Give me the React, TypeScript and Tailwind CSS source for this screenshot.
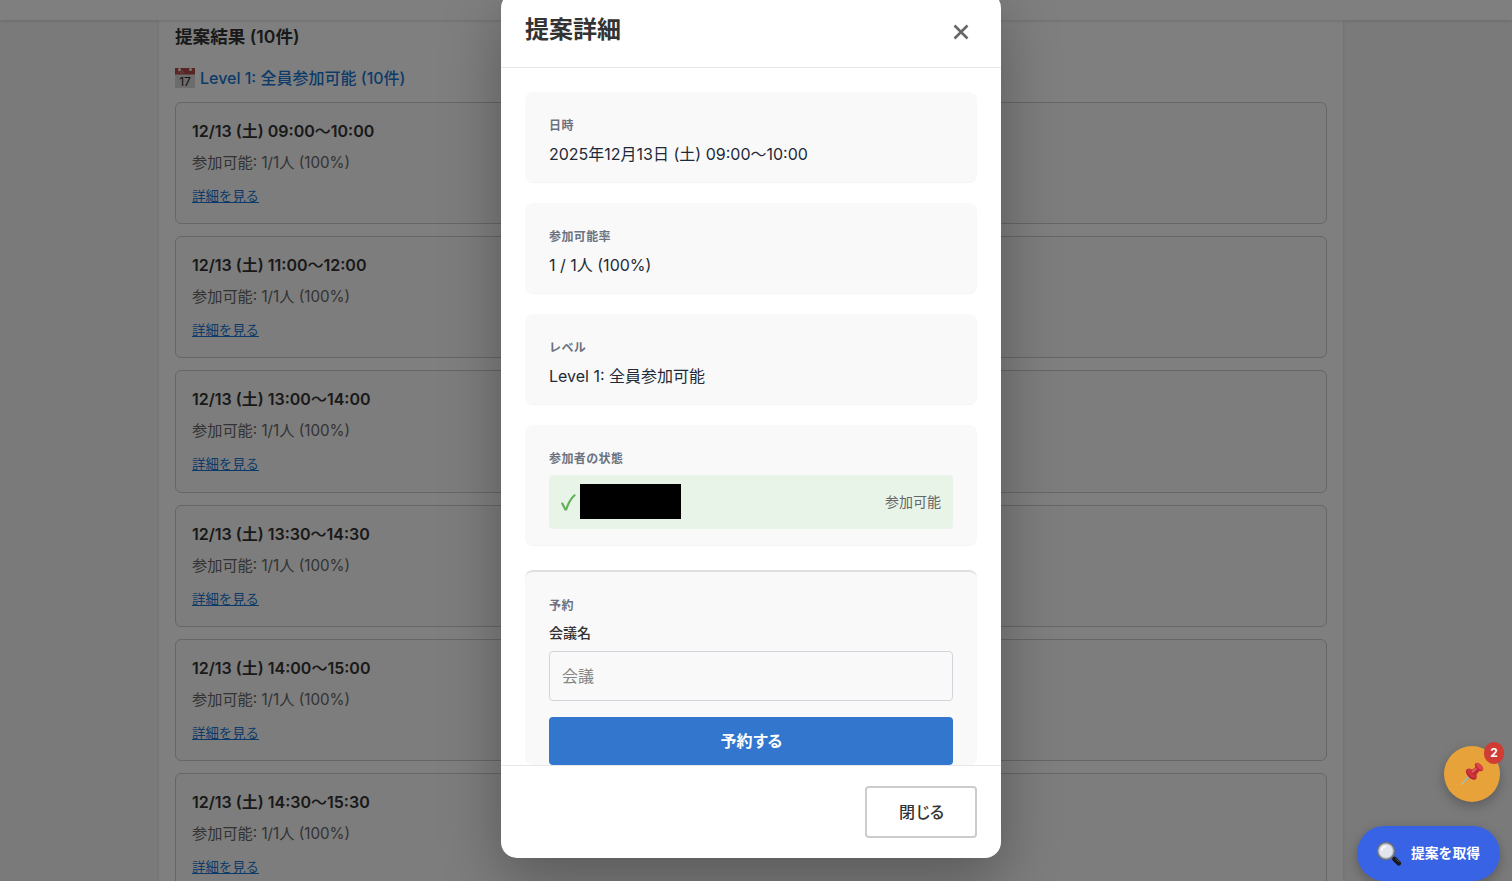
import React from "react";

const slots = [
  ["09:00", "10:00"],
  ["11:00", "12:00"],
  ["13:00", "14:00"],
  ["13:30", "14:30"],
  ["14:00", "15:00"],
  ["14:30", "15:30"],
];

const details = [
  { label: "日時", value: "2025年12月13日 (土) 09:00〜10:00" },
  { label: "参加可能率", value: "1 / 1人 (100%)" },
  { label: "レベル", value: "Level 1: 全員参加可能" },
];

function CalendarIcon() {
  return (
    <svg width="20" height="20" viewBox="0 0 20 20" className="shrink-0">
      <rect width="20" height="20" rx="0.6" fill="#d8d8d8" />
      <path d="M0 0h20v6.500H0z" fill="#b04a47" />
      <path d="m2.500 5.500 1.800-3.700 1.800 3.700M7 5.500V2.500l2.200 3" fill="none" stroke="#d3a29f" strokeWidth="0.6" />
      <circle cx="4.500" cy="1.500" r="1.500" fill="#f3f3f3" />
      <circle cx="15.500" cy="1.500" r="1.500" fill="#f3f3f3" />
      <text x="10" y="17.600" textAnchor="middle" fontSize="12" fontFamily="Inter, sans-serif" fontWeight="400" fill="#222">17</text>
    </svg>
  );
}

function PinIcon() {
  return (
    <svg width="24" height="24" viewBox="0 0 24 24">
      <path d="M.5 23.500 9.500 12.500l2 2Z" fill="#8fa3a8" />
      <path d="m1 22.800 9-9.300" stroke="#c9d6d8" strokeWidth="0.8" />
      <ellipse cx="11.300" cy="12.300" rx="6.700" ry="3.700" transform="rotate(45 11.300 12.300)" fill="#b3242e" />
      <ellipse cx="11.800" cy="11.400" rx="6" ry="3.200" transform="rotate(45 11.800 11.400)" fill="#cf343c" />
      <path d="m9.800 9.500 6.700-5.300 3.800 3.800-5.300 6.300Z" fill="#bd2b35" />
      <path d="m11 9.300 6-4.800 1.400 1.400-5.600 5.200Z" fill="#e2585b" />
      <ellipse cx="19" cy="5" rx="5" ry="2.800" transform="rotate(45 19 5)" fill="#be2933" />
      <ellipse cx="19.600" cy="4.400" rx="4.500" ry="2.100" transform="rotate(45 19.600 4.400)" fill="#dc464b" />
    </svg>
  );
}

function SearchIcon() {
  return (
    <svg width="26" height="26" viewBox="0 0 26 26">
      <path d="m15.800 15.500 3.400 3.400" stroke="#777" strokeWidth="3" />
      <path d="m18.500 18 4.300 4.300" stroke="#17191c" strokeWidth="4.600" strokeLinecap="round" />
      <path d="m19.500 17.300 4 4" stroke="#55585c" strokeWidth="1" />
      <circle cx="10" cy="10" r="8.300" fill="#e2e5ee" stroke="#69717b" strokeWidth="1.900" />
      <circle cx="10" cy="10" r="7.200" fill="none" stroke="#bcc1c8" strokeWidth="1.200" />
      <path d="M5.500 9c.5-2 2-3.500 4.200-3.600" fill="none" stroke="#fff" strokeWidth="1.500" strokeLinecap="round" />
    </svg>
  );
}

function SlotCard({ start, end }: { start: string; end: string }) {
  return (
    <div className="h-[122.2px] shrink-0 rounded-md border border-[#ccc] bg-[#fafafa] px-4 pt-4">
      <div className="h-6 text-base leading-6 font-semibold text-[#333]">
        12/13 (土) {start}
        <span className="font-medium">〜</span>
        {end}
      </div>
      <div className="mt-2 h-[23px] text-[15.2px] leading-[23px] text-[#666]">参加可能: 1/1人 (100%)</div>
      <button className="mt-2.5 block text-[13.4px] leading-6 text-[#1976d2] underline">詳細を見る</button>
    </div>
  );
}

function Results() {
  return (
    <div className="flex h-full flex-col bg-[#f5f5f5] pr-[10px]">
      <header className="relative z-10 -mr-[10px] h-5 shrink-0 bg-white shadow-[0_1px_3px_rgba(0,0,0,0.15)]"></header>
      <main className="mx-auto flex w-[1184px] flex-1 flex-col bg-white px-4 shadow-[0_1px_4px_rgba(0,0,0,0.1)]">
        <h2 className="mt-[3px] h-7 text-[17.6px] leading-7 font-semibold text-[#333]">提案結果 (10件)</h2>
        <h3 className="mt-[15px] mb-3 flex h-6 items-center gap-[5px] text-base leading-6 font-medium text-[#1976d2]">
          <CalendarIcon />
          Level 1: 全員参加可能 (10件)
        </h3>
        <div className="flex flex-col gap-3">
          {slots.map(([start, end]) => (
            <SlotCard key={start} start={start} end={end} />
          ))}
        </div>
      </main>
    </div>
  );
}

function Label({ children }: { children: React.ReactNode }) {
  return <div className="pt-px text-xs leading-[18px] font-semibold tracking-[0.4px] text-[#6b7280]">{children}</div>;
}

function DetailModal() {
  return (
    <div className="mt-[-8px] flex h-[866px] w-[500px] flex-col rounded-2xl bg-white shadow-[0_20px_60px_rgba(0,0,0,0.3)]">
      <div className="flex h-[76px] shrink-0 items-center justify-between border-b border-[#e5e7eb] px-6">
        <h2 className="text-2xl leading-9 font-semibold text-[#333]">提案詳細</h2>
        <button className="flex size-8 items-center justify-center pt-1">
          <svg width="16" height="16" viewBox="0 0 16 16" stroke="#666" strokeWidth="2.500">
            <path d="m1.500 1.500 13 13M14.500 1.500l-13 13" />
          </svg>
        </button>
      </div>

      <div className="flex min-h-0 flex-1 flex-col gap-5 overflow-hidden px-6 pt-6">
        {details.map((item) => (
          <section key={item.label} className="h-[91px] shrink-0 rounded-lg border-b border-[#f3f4f6] bg-[#f9f9f9] px-6 pt-6">
            <Label>{item.label}</Label>
            <div className="mt-[7px] text-base leading-6 text-[#1f2937]">{item.value}</div>
          </section>
        ))}

        <section className="h-[121px] shrink-0 rounded-lg border-b border-[#f3f4f6] bg-[#f9f9f9] px-6 pt-6">
          <Label>参加者の状態</Label>
          <div className="mt-[7px] flex h-[54px] items-center rounded bg-[#e9f4e9] px-3">
            <svg width="15" height="17" viewBox="0 0 15 17" fill="none" stroke="#66af5c" strokeWidth="2.200" strokeLinecap="round" strokeLinejoin="round">
              <path d="M1.300 9.500 4.300 15.500H5.200C7 10 9.500 5 13.500 1.300" />
            </svg>
            <div className="mb-[2px] ml-1 h-[35px] w-[101px] bg-black"></div>
            <span className="ml-auto text-sm text-[#666]">参加可能</span>
          </div>
        </section>

        <section className="mt-1 h-[195px] shrink-0 rounded-lg border-t-2 border-[#e0e0e0] bg-[#f9f9f9] px-6 pt-6">
          <Label>予約</Label>
          <label className="mt-[7px] block text-sm leading-[21px] font-medium text-[#333]">会議名</label>
          <input
            placeholder="会議"
            className="mt-2 block h-[50px] w-full rounded border border-[#d1d5db] bg-transparent px-3 text-base placeholder:text-[#858585]"
          />
          <button className="mt-4 block h-12 w-full rounded bg-[#3276cd] text-base font-semibold text-white">
            予約<span className="tracking-[-1.4px]">する</span>
          </button>
        </section>
      </div>

      <div className="flex h-[93px] shrink-0 justify-end border-t border-[#e5e7eb] px-6 pt-5">
        <button className="h-[52px] w-28 rounded border-2 border-[#ccc] bg-white text-base font-medium text-[#333]">
          閉<span className="tracking-[-1.9px]">じる</span>
        </button>
      </div>
    </div>
  );
}

export default function App() {
  return (
    <div className="relative h-[881px] w-[1512px] overflow-hidden font-['Inter','Noto_Sans_CJK_JP',sans-serif]">
      <Results />

      <div className="absolute inset-0 z-20 flex items-start justify-center bg-black/50 pr-[10px]">
        <DetailModal />
      </div>

      {/* floating actions stay above the overlay */}
      <button className="absolute top-[746px] left-[1444px] z-30 flex size-14 items-center justify-center rounded-full bg-[#e8a23a] shadow-[0_4px_12px_rgba(0,0,0,0.25)]">
        <PinIcon />
        <span className="absolute -top-1 -right-1 flex h-[22px] w-5 items-center justify-center rounded-full bg-[#d03b34] text-xs font-bold text-white">
          2
        </span>
      </button>
      <button className="absolute top-[826px] left-[1357px] z-30 flex h-[55px] w-[143px] items-center gap-[9px] rounded-full bg-[#3863e5] pl-[19px] text-[13.8px] font-semibold text-white shadow-[0_4px_12px_rgba(0,0,0,0.25)]">
        <SearchIcon />
        <span className="whitespace-nowrap">提案を取得</span>
      </button>
    </div>
  );
}
